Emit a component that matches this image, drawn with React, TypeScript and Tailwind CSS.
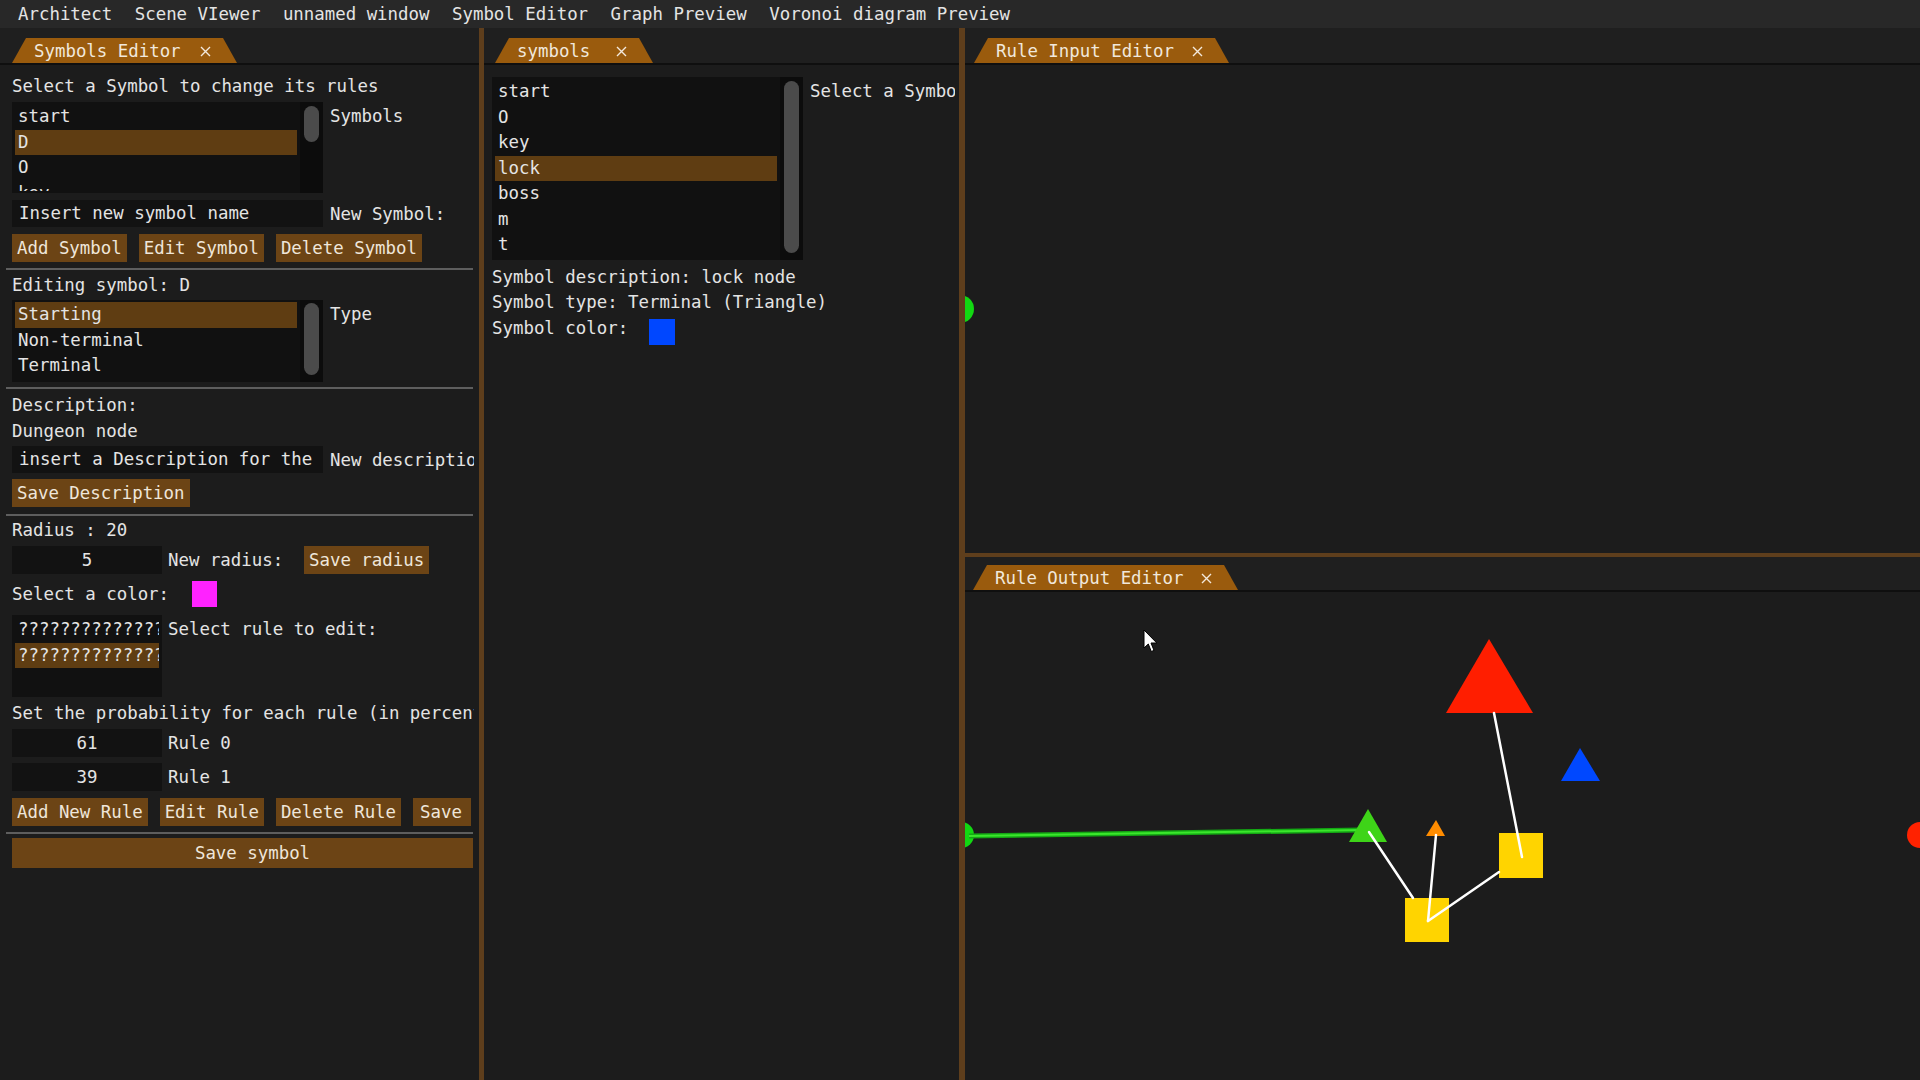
import React from "react";

function CloseX() {
  return (
    <svg width="11" height="11" viewBox="0 0 11 11" className="absolute right-[26px] top-[8px]">
      <path d="M1 1L10 10M10 1L1 10" stroke="#f3e9dc" strokeWidth="1.4" />
    </svg>
  );
}

function Tab({ label, cls }: { label: string; cls: string }) {
  return (
    <div
      className={`relative h-[25px] bg-[#9a5b0d] [clip-path:polygon(14px_0,calc(100%_-_14px)_0,100%_100%,0_100%)] pl-[22px] flex items-center whitespace-nowrap text-[#f1e8dc] ${cls}`}
    >
      <span>{label}</span>
      <CloseX />
    </div>
  );
}

function TabBar({ children, top }: { children: React.ReactNode; top?: string }) {
  return (
    <div className={`${top ?? "pt-[10px]"} bg-[#1f1f1f] shrink-0`}>
      <div className="flex">{children}</div>
      <div className="h-[2px] bg-[#0f0f0f]" />
    </div>
  );
}

function Item({ label, sel }: { label: string; sel?: boolean }) {
  return (
    <div
      className={`h-[25.5px] leading-[25.5px] pl-[3px] whitespace-nowrap overflow-hidden ${sel ? "bg-[#5f3d12]" : ""}`}
    >
      {label}
    </div>
  );
}

function Sep() {
  return <div className="-ml-[6px] w-[467px] h-[2px] bg-[#5e5e5e] shrink-0" />;
}

function Btn({ label, cls }: { label: string; cls?: string }) {
  return (
    <div
      className={`h-[28px] leading-[28px] px-[5px] bg-[#6c4415] whitespace-nowrap text-[#efe6da] ${cls ?? ""}`}
    >
      {label}
    </div>
  );
}

function Field({ text, cls }: { text: string; cls: string }) {
  return <div className={`bg-[#121212] whitespace-nowrap overflow-hidden ${cls}`}>{text}</div>;
}

export default function App() {
  return (
    <div className="w-[1920px] h-[1080px] bg-[#1c1c1c] flex flex-col overflow-hidden text-[#e4e4e4] [font-family:'DejaVu_Sans_Mono','Liberation_Mono',monospace] text-[17.4px] leading-[22px]">
      {/* Menu bar */}
      <div className="h-[28px] bg-[#282828] flex items-center pl-[18px] gap-[22.5px] shrink-0 whitespace-nowrap">
        <span>Architect</span>
        <span>Scene VIewer</span>
        <span>unnamed window</span>
        <span>Symbol Editor</span>
        <span>Graph Preview</span>
        <span>Voronoi diagram Preview</span>
      </div>

      <div className="flex flex-1 min-h-0">
        {/* Left panel */}
        <div className="w-[479px] shrink-0 flex flex-col">
          <TabBar>
            <Tab label="Symbols Editor" cls="ml-[12px] w-[225px]" />
          </TabBar>
          <div className="w-[474px] pl-[12px] overflow-hidden flex flex-col">
            <div className="mt-[10px] h-[22px] whitespace-nowrap">Select a Symbol to change its rules</div>

            <div className="mt-[5px] flex items-start">
              <div className="w-[311px] h-[91px] bg-[#111111] flex shrink-0">
                <div className="w-[288px] pl-[3px] pr-[3px] pt-[2px] h-[89px] overflow-hidden">
                  <Item label="start" />
                  <Item label="D" sel />
                  <Item label="O" />
                  <Item label="key" />
                </div>
                <div className="flex-1 bg-[#0c0c0c] px-[4px] pt-[4px]">
                  <div className="h-[36px] rounded-full bg-[#4b4b4b]" />
                </div>
              </div>
              <div className="ml-[7px] pt-[2px] leading-[25.5px] whitespace-nowrap">Symbols</div>
            </div>

            <div className="mt-[7px] flex items-center">
              <Field text="Insert new symbol name" cls="w-[311px] h-[27px] leading-[27px] pl-[7px] shrink-0" />
              <div className="ml-[7px] whitespace-nowrap">New Symbol:</div>
            </div>

            <div className="mt-[7px] flex gap-[12px]">
              <Btn label="Add Symbol" />
              <Btn label="Edit Symbol" />
              <Btn label="Delete Symbol" />
            </div>

            <div className="mt-[6px]">
              <Sep />
            </div>

            <div className="mt-[4px] h-[22px] whitespace-nowrap">Editing symbol: D</div>

            <div className="mt-[4px] flex items-start">
              <div className="w-[311px] h-[82px] bg-[#111111] flex shrink-0">
                <div className="w-[288px] pl-[3px] pr-[3px] pt-[2px] h-[80px] overflow-hidden">
                  <Item label="Starting" sel />
                  <Item label="Non-terminal" />
                  <Item label="Terminal" />
                </div>
                <div className="flex-1 bg-[#0c0c0c] px-[4px] pt-[3px]">
                  <div className="h-[72px] rounded-full bg-[#4b4b4b]" />
                </div>
              </div>
              <div className="ml-[7px] pt-[2px] leading-[25.5px] whitespace-nowrap">Type</div>
            </div>

            <div className="mt-[5px]">
              <Sep />
            </div>

            <div className="mt-[5px] h-[22px] whitespace-nowrap">Description:</div>
            <div className="mt-[4px] h-[22px] whitespace-nowrap">Dungeon node</div>

            <div className="mt-[4px] flex items-center">
              <Field text="insert a Description for the Symbol" cls="w-[311px] h-[27px] leading-[27px] pl-[7px] shrink-0" />
              <div className="ml-[7px] whitespace-nowrap">New description:</div>
            </div>

            <div className="mt-[6px] flex">
              <Btn label="Save Description" />
            </div>

            <div className="mt-[7px]">
              <Sep />
            </div>

            <div className="mt-[3px] h-[22px] whitespace-nowrap">Radius : 20</div>

            <div className="mt-[5px] flex items-center">
              <Field text="5" cls="w-[150px] h-[28px] leading-[28px] text-center shrink-0" />
              <div className="ml-[6px] w-[136px] whitespace-nowrap">New radius:</div>
              <Btn label="Save radius" />
            </div>

            <div className="mt-[7px] h-[26px] flex items-center">
              <span className="whitespace-nowrap">Select a color:</span>
              <div className="ml-[23px] w-[25px] h-[26px] bg-[#ff22ff]" />
            </div>

            <div className="mt-[8px] flex items-start">
              <div className="w-[150px] h-[82px] bg-[#111111] pl-[3px] pr-[3px] pt-[2px] overflow-hidden shrink-0">
                <Item label="??????????????" />
                <Item label="??????????????" sel />
              </div>
              <div className="ml-[6px] pt-[2px] leading-[25.5px] whitespace-nowrap">Select rule to edit:</div>
            </div>

            <div className="mt-[5px] h-[22px] whitespace-nowrap">Set the probability for each rule (in percentage)</div>

            <div className="mt-[5px] flex items-center">
              <Field text="61" cls="w-[150px] h-[28px] leading-[28px] text-center shrink-0" />
              <div className="ml-[6px] whitespace-nowrap">Rule 0</div>
            </div>
            <div className="mt-[6px] flex items-center">
              <Field text="39" cls="w-[150px] h-[28px] leading-[28px] text-center shrink-0" />
              <div className="ml-[6px] whitespace-nowrap">Rule 1</div>
            </div>

            <div className="mt-[7px] flex gap-[12px]">
              <Btn label="Add New Rule" />
              <Btn label="Edit Rule" />
              <Btn label="Delete Rule" />
              <Btn label="Save" cls="w-[58px] pl-[7px]" />
            </div>

            <div className="mt-[6px]">
              <Sep />
            </div>

            <div className="mt-[4px] w-[461px] h-[30px] leading-[30px] pl-[20px] bg-[#6c4415] text-center text-[#efe6da]">
              Save symbol
            </div>
          </div>
        </div>

        <div className="w-[5px] shrink-0 bg-[#5e3e1c]" />

        {/* Middle panel */}
        <div className="w-[475px] shrink-0 flex flex-col">
          <TabBar>
            <Tab label="symbols" cls="ml-[11px] w-[158px]" />
          </TabBar>
          <div className="w-[471px] pl-[8px] overflow-hidden flex flex-col">
            <div className="mt-[12px] flex items-start">
              <div className="w-[311px] h-[183px] bg-[#111111] flex shrink-0">
                <div className="w-[288px] pl-[3px] pr-[3px] pt-[2px] h-[181px] overflow-hidden">
                  <Item label="start" />
                  <Item label="O" />
                  <Item label="key" />
                  <Item label="lock" sel />
                  <Item label="boss" />
                  <Item label="m" />
                  <Item label="t" />
                </div>
                <div className="flex-1 bg-[#0c0c0c] px-[4px] pt-[4px]">
                  <div className="h-[172px] rounded-full bg-[#4b4b4b]" />
                </div>
              </div>
              <div className="ml-[7px] pt-[2px] leading-[25.5px] whitespace-nowrap">Select a Symbol</div>
            </div>
            <div className="mt-[4.5px] h-[25.5px] leading-[25.5px] whitespace-nowrap">Symbol description: lock node</div>
            <div className="h-[25.5px] leading-[25.5px] whitespace-nowrap">Symbol type: Terminal (Triangle)</div>
            <div className="flex items-start">
              <span className="leading-[25.5px] whitespace-nowrap">Symbol color:</span>
              <div className="ml-[21px] mt-[3.5px] w-[26px] h-[26px] bg-[#0047ff]" />
            </div>
          </div>
        </div>

        <div className="w-[6px] shrink-0 bg-[#5e3e1c]" />

        {/* Right column */}
        <div className="flex-1 min-w-0 flex flex-col">
          <div className="h-[525px] shrink-0 relative flex flex-col">
            <TabBar>
              <Tab label="Rule Input Editor" cls="ml-[9px] w-[255px]" />
            </TabBar>
            <svg className="absolute left-0 top-[267px]" width="12" height="30" viewBox="0 0 12 30">
              <circle cx="-5" cy="14" r="14" fill="#12d812" />
            </svg>
          </div>
          <div className="h-[4px] shrink-0 bg-[#5e3e1c]" />
          <div className="flex-1 relative flex flex-col">
            <TabBar top="pt-[8px]">
              <Tab label="Rule Output Editor" cls="ml-[8px] w-[265px]" />
            </TabBar>
            <svg className="absolute left-0 top-0" width="955" height="523" viewBox="0 0 955 523">
              {/* left green half circle */}
              <circle cx="-4" cy="278" r="13" fill="#12d812" />
              {/* right red half circle */}
              <circle cx="955" cy="278" r="13" fill="#ff2200" />
              {/* green connection */}
              <line x1="4" y1="279" x2="396" y2="273" stroke="#14a814" strokeWidth="5" />
              <line x1="4" y1="279" x2="396" y2="273" stroke="#3be62c" strokeWidth="2" />
              {/* triangles */}
              <polygon points="524,82 568,156 481,156" fill="#ff1e00" />
              <polygon points="615,191 635,224 596,224" fill="#0048ff" />
              <polygon points="403,252 422,285 384,285" fill="#3ed418" />
              <polygon points="471,263 480,279 461,279" fill="#ff8c00" />
              {/* squares */}
              <rect x="534" y="276" width="44" height="45" fill="#ffd400" />
              <rect x="440" y="341" width="44" height="44" fill="#ffd400" />
              {/* white connections */}
              <g stroke="#ffffff" strokeWidth="2.5" strokeLinecap="round">
                <line x1="529" y1="156" x2="557" y2="300" />
                <line x1="404" y1="275" x2="448" y2="341" />
                <line x1="471" y1="278" x2="463" y2="364" />
                <line x1="463" y1="364" x2="534" y2="315" />
              </g>
            </svg>
            {/* mouse cursor */}
            <svg className="absolute left-[178px] top-[72px]" width="16" height="25" viewBox="0 0 16 25">
              <path
                d="M1 1 L1 19 L5.3 15 L8.3 22.5 L11 21.4 L8 14 L13.8 14 Z"
                fill="#ffffff"
                stroke="#000000"
                strokeWidth="1"
                strokeLinejoin="round"
              />
            </svg>
          </div>
        </div>
      </div>
    </div>
  );
}
